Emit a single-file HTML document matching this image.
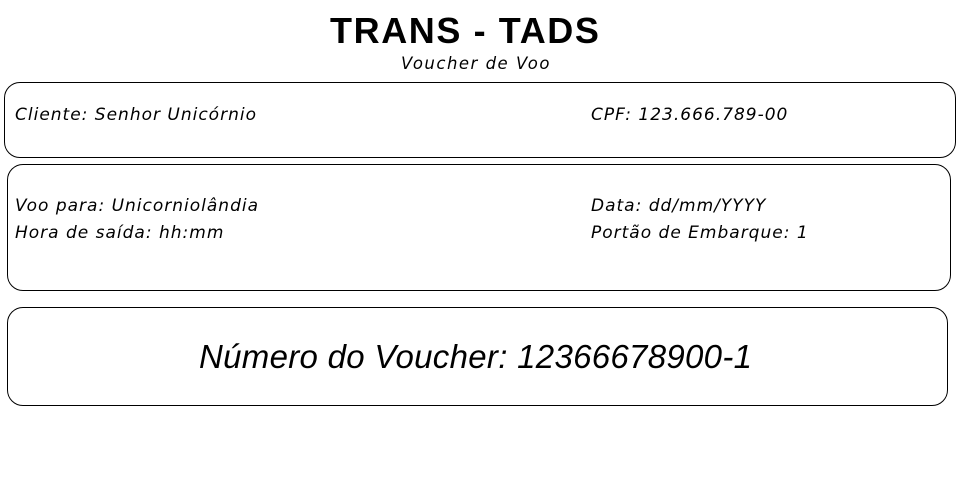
<!DOCTYPE html>
<html><head><meta charset="utf-8"><style>
body{margin:0;width:963px;height:488px;background:#fff;position:relative;font-family:"Liberation Sans",sans-serif;color:#000;overflow:hidden}
.t{position:absolute;white-space:nowrap;font-style:italic;font-family:"DejaVu Sans",sans-serif;font-size:17px;letter-spacing:1px}
.box{position:absolute;border:1px solid #000;border-radius:16px;box-sizing:border-box}
</style></head><body>
<div class="t" style="left:330px;top:10px;font-family:'Liberation Sans',sans-serif;font-style:normal;font-weight:bold;font-size:36px;letter-spacing:1.6px">TRANS - TADS</div>
<div class="t" style="left:401px;top:54px;font-size:16.5px;letter-spacing:1.5px">Voucher de Voo</div>
<div class="box" style="left:4px;top:82px;width:952px;height:76px"></div>
<div class="box" style="left:7px;top:164px;width:944px;height:127px"></div>
<div class="box" style="left:7px;top:307px;width:941px;height:99px"></div>
<div class="t" style="left:15px;top:105px">Cliente: Senhor Unicórnio</div>
<div class="t" style="left:591px;top:105px">CPF: 123.666.789-00</div>
<div class="t" style="left:15px;top:196px">Voo para: Unicorniolândia</div>
<div class="t" style="left:15px;top:223px">Hora de saída: hh:mm</div>
<div class="t" style="left:591px;top:196px">Data: dd/mm/YYYY</div>
<div class="t" style="left:591px;top:223px">Portão de Embarque: 1</div>
<div class="t" style="left:199px;top:338px;font-family:'Liberation Sans',sans-serif;font-size:33px;letter-spacing:0.3px">Número do Voucher: 12366678900-1</div>
</body></html>
